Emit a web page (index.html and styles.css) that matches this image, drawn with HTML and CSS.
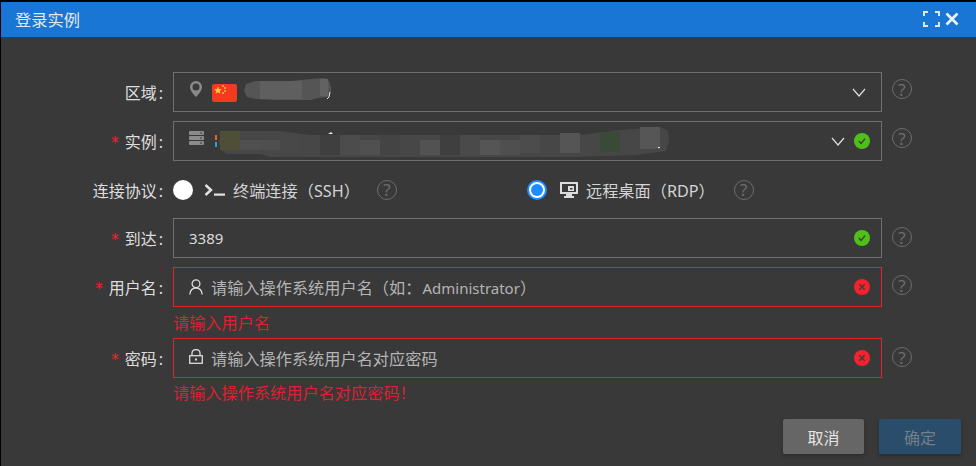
FILE: index.html
```html
<!DOCTYPE html>
<html lang="zh-CN">
<head>
<meta charset="utf-8">
<title>登录实例</title>
<link rel="stylesheet" href="styles.css">
</head>
<body>
<div class="dialog">
  <header class="dialog-head">
    <span class="dialog-title">登录实例</span>
    <div class="head-tools">
      <svg class="ico-expand" width="17" height="16" viewBox="0 0 17 16"><path d="M1 5V1h4M12 1h4v4M16 11v4h-4M5 15H1v-4" fill="none" stroke="#dfe6ee" stroke-width="2"/></svg>
      <svg class="ico-close" width="14" height="14" viewBox="0 0 14 14"><path d="M1.500 1.500l11 11M12.500 1.500l-11 11" fill="none" stroke="#eef2f6" stroke-width="2.600"/></svg>
    </div>
  </header>
  <form class="dialog-body">
    <div class="row">
      <label class="label">区域<i>:</i></label>
      <div class="field">
        <svg class="lead pin" width="12" height="16" viewBox="0 0 12 16"><path fill="#8a8a8a" fill-rule="evenodd" d="M6 0a6 6 0 0 1 6 6c0 3.400-3.500 7.500-6 10C3.500 13.500 0 9.400 0 6a6 6 0 0 1 6-6zm0 2.500a3.500 3.500 0 1 0 0 7 3.500 3.500 0 0 0 0-7z"/></svg>
        <svg class="flag" width="25" height="18" viewBox="0 0 25 18"><rect width="25" height="18" rx="2" fill="#f3391f"/><path fill="#fbc63b" d="M6 2.500l1.100 2.500 2.700.2-2 1.800.6 2.700L6 8.300 3.600 9.700l.6-2.700-2-1.800 2.700-.2z"/><g fill="#f0a030"><rect x="10" y="1" width="2" height="2"/><rect x="12" y="3" width="2" height="2"/><rect x="12" y="6" width="2" height="2"/><rect x="10" y="8" width="2" height="2"/></g></svg>
        <svg class="smudge" width="88" height="26" viewBox="0 0 88 26"><path fill="#555" d="M12 3h35l20-2 14-1 4 3 2 6v5l-3 5-10 1-7 2H32L12 21 3 19 0 13l2-7z"/><rect x="16" y="3" width="42" height="18" fill="#5f5f5f"/><rect x="76" y="1" width="8" height="17" fill="#626262"/><path d="M86 14l-1 5-2 2" fill="none" stroke="#e6e6e6" stroke-width="1"/></svg>
        <span class="end-gap"></span>
        <svg class="chev" width="14" height="9" viewBox="0 0 14 9"><path d="M1 1l6 7 6-7" fill="none" stroke="#dedede" stroke-width="1.200"/></svg>
      </div>
      <span class="help help-r1">?</span>
    </div>

    <div class="row">
      <label class="label"><b>*</b>实例<i>:</i></label>
      <div class="field">
        <svg class="lead server" width="15" height="15" viewBox="0 0 15 15"><g fill="#8b8b8b"><rect width="15" height="4" rx="1"/><rect y="5" width="15" height="4" rx="1"/><rect y="10" width="15" height="4" rx="1"/></g><g fill="#3a3a3a"><rect x="11" y="1.500" width="2" height="1"/><rect x="11" y="6.500" width="2" height="1"/><rect x="11" y="11.500" width="2" height="1"/></g></svg>
        <svg class="smudge-long" width="456" height="32" viewBox="0 0 456 32"><rect x="0" y="10" width="2" height="5" fill="#e0662c"/><rect x="0" y="17" width="2" height="5" fill="#2c9fd8"/><path fill="#474747" d="M6 9l4-3h55l30 4h270l40-5 40-3 8 4 1 10-3 10-30 4-60 2-100 2H60l-14-5H12l-6-4-2-8z"/><rect x="5" y="6" width="20" height="19" fill="#4f4f38"/><rect x="25" y="15" width="20" height="10" fill="#505050"/><rect x="45" y="15" width="20" height="10" fill="#4f4f4f"/><rect x="65" y="12" width="20" height="17" fill="#484848"/><rect x="105" y="10" width="20" height="20" fill="#3f3f3f"/><rect x="125" y="10" width="20" height="20" fill="#4c4c4c"/><rect x="145" y="15" width="20" height="15" fill="#505050"/><rect x="165" y="10" width="20" height="20" fill="#444"/><rect x="205" y="15" width="20" height="15" fill="#525252"/><rect x="225" y="10" width="20" height="20" fill="#3f3f3f"/><rect x="245" y="10" width="20" height="20" fill="#4a4a4a"/><rect x="265" y="15" width="20" height="15" fill="#555"/><rect x="285" y="15" width="20" height="15" fill="#4f4f4f"/><rect x="305" y="10" width="20" height="18" fill="#4c4c4c"/><rect x="345" y="8" width="20" height="20" fill="#555"/><rect x="385" y="7" width="20" height="20" fill="#394a39"/><rect x="425" y="2" width="20" height="22" fill="#565656"/><path fill="#e6e6e6" d="M113 9l3-2 2 2zM443 22h2v1h-2z"/></svg>
        <span class="end-gap"></span>
        <svg class="chev chev-status" width="14" height="9" viewBox="0 0 14 9"><path d="M1 1l6 7 6-7" fill="none" stroke="#dedede" stroke-width="1.200"/></svg>
        <svg class="status" width="16" height="16" viewBox="0 0 16 16"><circle cx="8" cy="8" r="8" fill="#4fc01a"/><path d="M4.800 8l2.300 2.500 4-4.800" fill="none" stroke="#3a3a3a" stroke-width="1.300"/></svg>
      </div>
      <span class="help help-r1">?</span>
    </div>

    <div class="row row-proto">
      <label class="label">连接协议<i>:</i></label>
      <div class="proto">
        <div class="option option-ssh">
          <span class="radio"></span>
          <svg class="opt-ico" width="21" height="14" viewBox="0 0 21 14"><path d="M1.500 2l5.500 5-5.500 5" fill="none" stroke="#e4e4e4" stroke-width="2.400"/><rect x="10" y="10.500" width="11" height="2.200" fill="#e4e4e4"/></svg>
          <span class="opt-text">终端连接（SSH）</span>
          <span class="help">?</span>
        </div>
        <div class="option option-rdp">
          <span class="radio radio-on"></span>
          <svg class="opt-ico" width="18" height="16" viewBox="0 0 18 16"><path fill="#dcdcdc" fill-rule="evenodd" d="M0 0h18v12h-6v2h2v2H4v-2h2v-2H0zm2 2v8h14V2z"/><path fill="#dcdcdc" d="M8 4h6v5H8z"/><path fill="#3a3a3a" d="M10 6h2.500v1.500H10z"/></svg>
          <span class="opt-text">远程桌面（RDP）</span>
          <span class="help">?</span>
        </div>
      </div>
    </div>

    <div class="row">
      <label class="label"><b>*</b>到达<i>:</i></label>
      <div class="field">
        <span class="value">3389</span>
        <span class="end-gap"></span>
        <svg class="status" width="16" height="16" viewBox="0 0 16 16"><circle cx="8" cy="8" r="8" fill="#4fc01a"/><path d="M4.800 8l2.300 2.500 4-4.800" fill="none" stroke="#3a3a3a" stroke-width="1.300"/></svg>
      </div>
      <span class="help help-r2">?</span>
    </div>

    <div class="row row-err">
      <label class="label"><b>*</b>用户名<i>:</i></label>
      <div class="field field-err">
        <svg class="lead user" width="14" height="16" viewBox="0 0 14 16"><g fill="none" stroke="#dcdcdc" stroke-width="1.300"><circle cx="7" cy="4.800" r="3.900"/><path d="M.8 15.500c.4-3.800 2.800-6.500 6.200-6.500s5.800 2.700 6.200 6.500"/></g></svg>
        <span class="placeholder">请输入操作系统用户名（如：<span class="latin">Administrator</span>）</span>
        <span class="end-gap"></span>
        <svg class="status" width="16" height="16" viewBox="0 0 16 16"><circle cx="8" cy="8" r="8" fill="#f5222d"/><path d="M5.300 5.300l5.400 5.400M10.700 5.300l-5.400 5.400" fill="none" stroke="#3a3a3a" stroke-width="1.300"/></svg>
      </div>
      <span class="help help-r3">?</span>
    </div>
    <p class="error error-user">请输入用户名</p>

    <div class="row row-err">
      <label class="label"><b>*</b>密码<i>:</i></label>
      <div class="field field-err">
        <svg class="lead lock" width="14" height="15" viewBox="0 0 14 15"><g fill="none" stroke="#dcdcdc" stroke-width="1.300"><rect x=".7" y="6.700" width="12.600" height="7.600"/><path d="M3 6.500V4a4 3.400 0 0 1 8 0v2.500"/></g><rect x="6" y="9.500" width="2" height="2" fill="#dcdcdc"/></svg>
        <span class="placeholder">请输入操作系统用户名对应密码</span>
        <span class="end-gap"></span>
        <svg class="status" width="16" height="16" viewBox="0 0 16 16"><circle cx="8" cy="8" r="8" fill="#f5222d"/><path d="M5.300 5.300l5.400 5.400M10.700 5.300l-5.400 5.400" fill="none" stroke="#3a3a3a" stroke-width="1.300"/></svg>
      </div>
      <span class="help help-r2">?</span>
    </div>
    <p class="error error-pass">请输入操作系统用户名对应密码！</p>

    <div class="actions">
      <button type="button" class="btn btn-cancel">取消</button>
      <button type="button" class="btn btn-ok">确定</button>
    </div>
  </form>
</div>
</body>
</html>
```

FILE: styles.css
```css
* { box-sizing: border-box; }
html, body { margin: 0; height: 100%; }
body {
  background: #000;
  overflow: hidden;
  font-family: "Noto Sans", "Noto Sans CJK SC", sans-serif;
}
.dialog {
  width: 976px;
  height: 466px;
  padding: 2px 0 0 1px;
  display: flex;
  flex-direction: column;
}
.dialog-head {
  height: 35px;
  flex: none;
  background: #1976d4;
  display: flex;
  align-items: center;
  justify-content: space-between;
  padding: 0 17px 0 14px;
  color: #e2e8ee;
  font-size: 16.250px;
}
.dialog-title { line-height: 35px; position: relative; top: 1px; }
.head-tools { display: flex; align-items: center; gap: 5px; margin-top: -1px; }
.dialog-body {
  flex: 1;
  background: #393939;
  padding-top: 35px;
  margin: 0;
  display: flex;
  flex-direction: column;
}
.row {
  display: flex;
  align-items: center;
  height: 40px;
  margin-bottom: 9px;
  flex: none;
}
.row-proto { height: 39px; }
.row-err { margin-bottom: 0; }
.label {
  width: 172px;
  padding-right: 10px;
  flex: none;
  text-align: right;
  color: #dedede;
  font-size: 16px;
  white-space: nowrap;
}
.label b {
  color: #f5222d;
  font-weight: 400;
  font-size: 15px;
  margin-right: 6px;
  font-family: "DejaVu Sans", sans-serif;
}
.label i { font-style: normal; margin-left: 2px; }
.field {
  width: 709px;
  height: 40px;
  flex: none;
  border: 1px solid #6f6f6f;
  display: flex;
  align-items: center;
  padding: 0 11px 0 15px;
  overflow: hidden;
}
.field-err { border-color: #e32230; }
.end-gap { flex: 1; }
.lead { flex: none; }
.pin { margin: -7px 0 0 1px; }
.flag { margin: 2px 0 0 10px; flex: none; }
.smudge { margin: -2px 0 0 7px; flex: none; }
.server { margin-top: -6px; }
.smudge-long { margin: 0 0 0 11px; flex: none; }
.chev { margin-right: 4px; }
.chev-status { margin-right: 9px; }
.status { flex: none; }
.value { color: #dcdcdc; font-size: 15px; padding-left: 0; }
.placeholder { color: #b4b4b4; font-size: 16.200px; margin-left: 8px; white-space: nowrap; }
.latin { font-size: 15px; margin-left: 1px; }
.user { margin-left: 0; }
.lock { margin-top: -3px; }
.help {
  width: 20px;
  height: 20px;
  flex: none;
  border: 1.500px solid #6d6d6d;
  border-radius: 50%;
  color: #6d6d6d;
  display: flex;
  align-items: center;
  justify-content: center;
  font-size: 17px;
  line-height: 1;
}
.row > .help { margin-left: 10px; }
.help-r1 { margin-top: -6px; }
.help-r2 { margin-top: -2px; }
.help-r3 { margin-top: -4px; }
.proto { display: flex; align-items: center; flex: 1; }
.option { display: flex; align-items: center; }
.option-ssh { width: 354px; }
.radio {
  width: 20px;
  height: 20px;
  flex: none;
  border-radius: 50%;
  background: #fff;
  margin-right: 11px;
}
.radio-on {
  border: 2px solid #1c8cff;
  background: #fff;
  position: relative;
  margin-right: 13px;
}
.radio-on::after {
  content: "";
  position: absolute;
  inset: 2px;
  border-radius: 50%;
  background: #1c8cff;
}
.opt-ico { flex: none; margin-right: 8px; }
.opt-text { color: #d4d4d4; font-size: 16.200px; white-space: nowrap; }
.option-ssh .help { margin-left: 17px; }
.option-rdp .help { margin-left: 19px; }
.error {
  margin: 0;
  height: 31px;
  flex: none;
  color: #dc2230;
  font-size: 16.200px;
  line-height: 20px;
  padding: 6px 0 0 172px;
}
.error-pass { height: 41px; padding-top: 5px; }
.actions {
  display: flex;
  justify-content: flex-end;
  gap: 15px;
  padding-right: 15px;
}
.btn {
  height: 35px;
  border: 0;
  border-radius: 2px;
  font: inherit;
  font-size: 16px;
  padding: 0;
  box-shadow: 0 2px 4px rgba(0,0,0,.25);
}
.btn-cancel { width: 81px; background: #666; color: #e4e4e4; }
.btn-ok { width: 82px; background: #2a4d6b; color: #737f88; }
```
